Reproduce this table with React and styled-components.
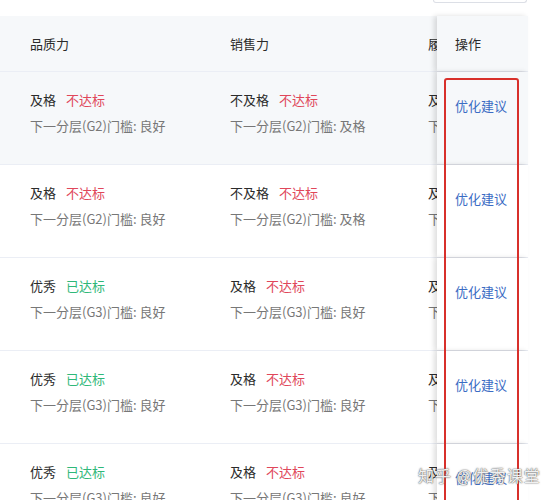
import styled, { createGlobalStyle } from "styled-components";

const GlobalStyle = createGlobalStyle`
    body {
        margin: 0;
        background: #fff;
        font-family: "Noto Sans CJK SC", "Noto Sans", sans-serif;
    }
`

const rows = [
    { a: ["及格", false, "G2", "良好"], b: ["不及格", false, "G2", "及格"], c: ["及格", "G2", "良好"], hover: true },
    { a: ["及格", false, "G2", "良好"], b: ["不及格", false, "G2", "及格"], c: ["及格", "G2", "良好"] },
    { a: ["优秀", true, "G3", "良好"], b: ["及格", false, "G3", "良好"], c: ["及格", "G3", "良好"] },
    { a: ["优秀", true, "G3", "良好"], b: ["及格", false, "G3", "良好"], c: ["及格", "G3", "良好"] },
    { a: ["优秀", true, "G3", "良好"], b: ["及格", false, "G3", "良好"], c: ["及格", "G3", "良好"] },
]

const Cell = ({ v }) => <CellBox>
    <div className="top">
        <span>{v[0]}</span><Tag ok={v[1]}>{v[1] ? "已达标" : "不达标"}</Tag>
    </div>
    <div className="sub">下一分层({v[2]})门槛: {v[3]}</div>
</CellBox>

const App = () => {
    return <Page>
        <GlobalStyle />
        <Toolbar><SelectEdge /></Toolbar>
        <Table>
            <Row head>
                <Scroll>
                    <Cols>
                        <HeadCell>品质力</HeadCell>
                        <HeadCell>销售力</HeadCell>
                        <HeadCell>履约力</HeadCell>
                    </Cols>
                </Scroll>
                <Fixed head><HeadCell>操作</HeadCell></Fixed>
            </Row>
            {rows.map((r, i) => <Row key={i} hover={r.hover}>
                <Scroll>
                    <Cols>
                        <Cell v={r.a} />
                        <Cell v={r.b} />
                        <Cell v={[r.c[0], false, r.c[1], r.c[2]]} />
                    </Cols>
                </Scroll>
                <Fixed><Link>优化建议</Link></Fixed>
            </Row>)}
            <Highlight />
        </Table>
        <Watermark>知乎 @优秀课堂</Watermark>
    </Page>
}

const Page = styled.div`
    width: 552px;
    height: 500px;
    overflow: hidden;
    position: relative;
`
const Toolbar = styled.div`
    height: 16px;
    width: 528px;
    display: flex;
    justify-content: flex-end;
`
const SelectEdge = styled.div`
    width: 92px;
    height: 2px;
    margin-right: 1px;
    border: 1px solid #dcdfe6;
    border-top: none;
    border-radius: 0 0 4px 4px;
`
const Table = styled.div`
    width: 528px;
    position: relative;
`
const Row = styled.div`
    display: flex;
    height: ${p => p.head ? "55px" : "92px"};
    border-bottom: 1px solid #ebeef5;
    background: ${p => p.head || p.hover ? "#f6f8fa" : "#fff"};
    color: #2b2b2b;
    font-size: 13px;
`
const Scroll = styled.div`
    width: 437px;
    overflow: hidden;
`
const Cols = styled.div`
    display: grid;
    grid-template-columns: 200px 198px 200px;
    height: 100%;
`
const HeadCell = styled.div`
    display: flex;
    align-items: center;
    height: 100%;
    padding-left: 30px;
`
const CellBox = styled.div`
    padding: 19px 0 0 30px;
    .top{
        display: flex;
        gap: 10px;
        line-height: 18px;
    }
    .sub{
        margin-top: 8px;
        line-height: 18px;
        color: #777;
    }
`
const Tag = styled.span`
    color: ${p => p.ok ? "#2fb879" : "#e0475a"};
`
const Fixed = styled.div`
    width: 91px;
    position: relative;
    background: inherit;
    box-shadow: -3px 0 5px rgba(0,0,0,0.13);
    & > ${HeadCell} { padding-left: 18px; }
`
const Link = styled.div`
    padding: 25px 0 0 18px;
    line-height: 18px;
    color: #3b6cc4;
`
const Highlight = styled.div`
    position: absolute;
    left: 444px;
    top: 62px;
    width: 71px;
    height: 460px;
    border: 2px solid #d8302b;
    border-radius: 3px;
`
const Watermark = styled.div`
    position: absolute;
    left: 418px;
    top: 463px;
    font-size: 16px;
    color: rgba(255,255,255,0.92);
    text-shadow: 0 0 1px #555, 0 0 2px #777;
    letter-spacing: 1px;
`
export default App;
